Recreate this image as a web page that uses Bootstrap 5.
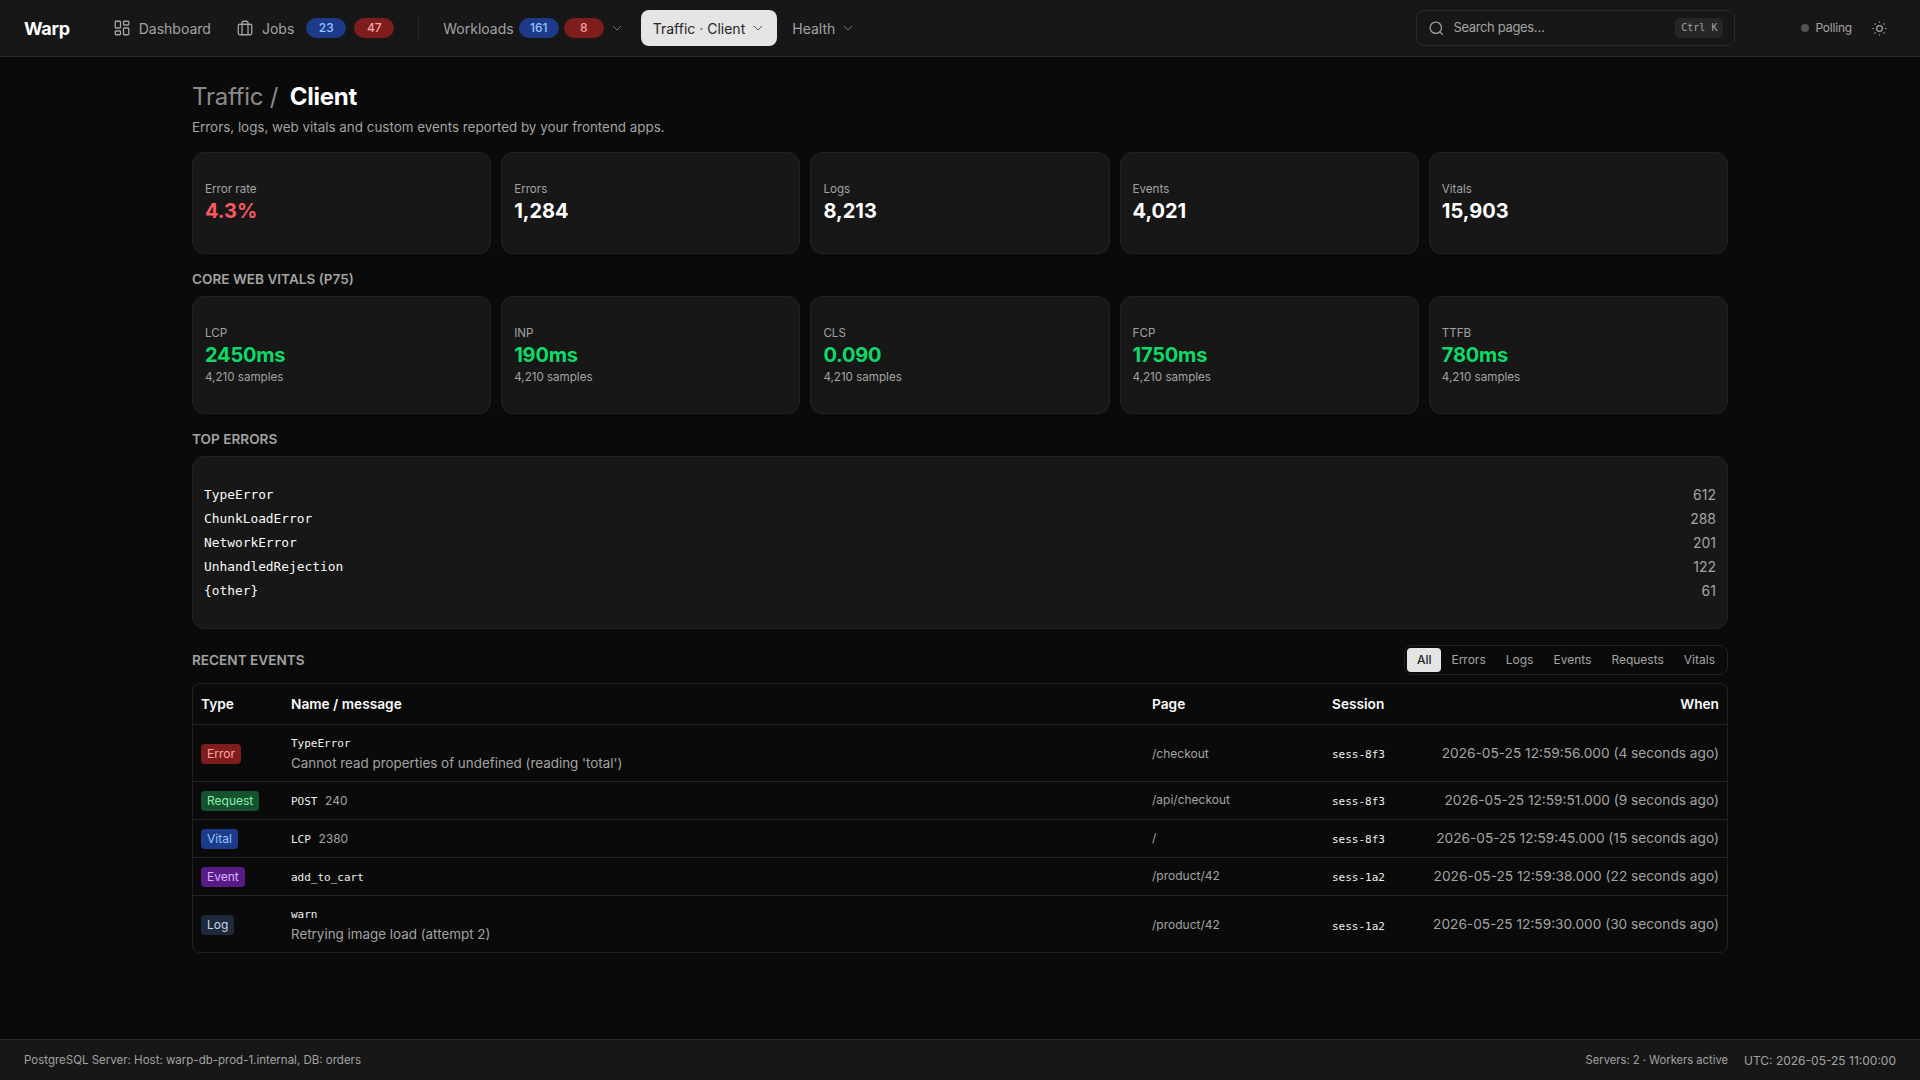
<!DOCTYPE html>
<html lang="en" data-bs-theme="dark">
<head>
    <meta charset="UTF-8">
    <meta name="viewport" content="width=device-width, initial-scale=1.0">
    <title>Warp - Traffic / Client</title>
    <link href="https://cdn.jsdelivr.net/npm/bootstrap@5.3.0/dist/css/bootstrap.min.css" rel="stylesheet">
    <style>
        body { background: #0a0a0a; color: #fafafa; font-family: Inter, "Liberation Sans", sans-serif; font-size: 14px; }
        .mono { font-family: "DejaVu Sans Mono", monospace; }

        /* top bar */
        .topbar { height: 57px; background: #171717; border-bottom: 1px solid #2a2a2a; padding: 0 24px; }
        .brand { font-size: 18px; font-weight: 700; color: #fff; letter-spacing: -.3px; text-decoration: none; margin-right: 31px; }
        .top-link { color: #a3a3a3; font-size: 14px; text-decoration: none; display: flex; align-items: center; height: 36px; padding: 0 12px; border-radius: 8px; white-space: nowrap; margin-right: 1px; }
        .top-link svg { flex: none; }
        .top-link.current { background: #e5e5e5; color: #262626; padding-right: 11px; margin-left: 3px; margin-right: 3px; gap: 5px; }
        .gap-icon { gap: 8px; }
        .gap-workloads { gap: 5px; }
        .gap-health { gap: 5px; }
        .top-link .sub-dot { color: #525252; }
        .count { display: inline-block; width: 40px; height: 20px; line-height: 20px; border-radius: 10px; text-align: center; font-size: 12px; font-weight: 500; }
        .count-blue { background: #1e3a8a; color: #93c5fd; }
        .count-red { background: #7f1d1d; color: #fca5a5; }
        .jobs-first { margin-left: 4px; }
        .top-sep { width: 1px; height: 24px; background: #2a2a2a; margin: 0 12px 0 11px; }
        .search-box { width: 319px; height: 36px; border: 1px solid #2a2a2a; border-radius: 8px; padding: 0 11px; color: #a3a3a3; font-size: 13px; letter-spacing: -.35px; }
        .search-key { background: #262626; color: #a3a3a3; border-radius: 5px; font-size: 10px; padding: 3px 6px; height: 20px; line-height: 14px; letter-spacing: 0; }
        .poll-wrap { margin-left: 66px; font-size: 12px; color: #a3a3a3; gap: 6px; letter-spacing: -.2px; }
        .poll-dot { width: 8px; height: 8px; border-radius: 50%; background: #525252; }
        .sun-icon { margin-left: 19px; margin-right: 8px; color: #a3a3a3; }

        /* page */
        .page-wrap { width: 1536px; margin: 0 auto; padding-top: 24px; }
        .page-title { font-size: 24px; line-height: 32px; font-weight: 400; color: #8a8a8a; margin: 0 0 4px; letter-spacing: -.25px; }
        .page-title b { color: #fff; font-weight: 700; }
        .title-slash { margin-right: 5px; }
        .page-sub { font-size: 13.4px; line-height: 20px; color: #a3a3a3; margin: 0 0 15px; }
        .stat-grid { display: grid; grid-template-columns: repeat(5, 1fr); gap: 10px; }
        .stat-box { background: #171717; border: 1px solid #222; border-radius: 12px; padding: 0 12px; display: flex; flex-direction: column; justify-content: center; height: 102px; }
        .stat-box.tall { height: 118px; }
        .stat-label { font-size: 11.6px; line-height: 16px; color: #a3a3a3; }
        .stat-val { font-size: 20px; line-height: 28px; font-weight: 700; color: #fff; }
        .stat-val.bad { color: #f8585f; }
        .stat-val.good { color: #0fd968; letter-spacing: -.2px; }
        .stat-note { font-size: 11.6px; line-height: 16px; color: #a3a3a3; }
        .sect-head { font-size: 13.6px; line-height: 20px; font-weight: 600; color: #a3a3a3; text-transform: uppercase; margin: 0; }
        .head-vitals { margin-top: 15px; margin-bottom: 7px; }
        .head-errors { margin-top: 15px; }
        .head-events { margin-top: 16px; }

        .errors-box { background: #171717; border: 1px solid #222; border-radius: 12px; height: 173px; padding: 26px 11px 0 11px; margin-top: 7px; }
        .err-row { height: 24px; line-height: 24px; font-size: 14px; color: #a3a3a3; }
        .err-row .mono { font-size: 12.85px; color: #fafafa; }

        .filter-group { border: 1px solid #222; border-radius: 8px; padding: 2px; height: 30px; }
        .filter-btn { font-size: 12px; color: #a3a3a3; height: 24px; line-height: 24px; padding: 0 10px; border-radius: 4px; text-decoration: none; }
        .filter-btn.current { background: #e5e5e5; color: #262626; font-weight: 500; }

        .events-wrap { border: 1px solid #222; border-radius: 8px; margin-top: 8px; overflow: hidden; }
        .events { --bs-table-bg: transparent; --bs-table-color: #a3a3a3; margin: 0; font-size: 13.4px; table-layout: fixed; }
        .col-type { width: 90px; }
        .col-page { width: 180px; }
        .col-session { width: 80px; }
        .col-when { width: 323px; }
        .events th { color: #fafafa; font-size: 13.7px; font-weight: 600; height: 40px; padding: 2px 8px 0; vertical-align: middle; border-color: #262626; }
        .events td { padding: 0 8px; vertical-align: middle; height: 38px; border-color: #262626; }
        .events tr.two-line td { height: 57px; padding-top: 2px; }
        .events tbody tr:last-child td { border-bottom: 0; }
        .events .mono { color: #f0f0f0; font-size: 11px; }
        .events .page-cell { font-size: 12px; }
        .events .when-cell { font-size: 13.7px; white-space: nowrap; }
        .ev-tag { display: inline-block; font-size: 12px; line-height: 20px; height: 20px; padding: 0 6px; border-radius: 4px; }
        .tag-error { background: #7f1d1d; color: #fca5a5; }
        .tag-request { background: #14532d; color: #86efac; }
        .tag-vital { background: #1e3a8a; color: #93c5fd; }
        .tag-event { background: #581c87; color: #d8b4fe; }
        .tag-log { background: #1e293b; color: #cbd5e1; }
        .ev-msg { line-height: 20px; display: block; }
        .ev-name { line-height: 18px; display: block; }

        .foot-bar { height: 41px; background: #171717; border-top: 1px solid #2a2a2a; padding: 1px 24px 0; font-size: 11.5px; color: #a3a3a3; }
        .foot-servers { font-size: 11.2px; }
        .foot-time { font-size: 12px; }
    </style>
</head>
<body class="d-flex flex-column min-vh-100">

    <!-- Top bar -->
    <nav class="topbar d-flex align-items-center flex-shrink-0">
        <a class="brand" href="#">Warp</a>
        <a class="top-link gap-icon" href="#">
            <svg width="18" height="18" viewBox="0 0 24 24" fill="none" stroke="currentColor" stroke-width="1.75"><rect x="3" y="3" width="7" height="9" rx="1"/><rect x="14" y="3" width="7" height="5" rx="1"/><rect x="14" y="12" width="7" height="9" rx="1"/><rect x="3" y="16" width="7" height="5" rx="1"/></svg>
            <span>Dashboard</span>
        </a>
        <a class="top-link gap-icon" href="#">
            <svg width="18" height="18" viewBox="0 0 24 24" fill="none" stroke="currentColor" stroke-width="1.75"><rect x="3" y="7" width="18" height="14" rx="2"/><path d="M16 21V5a2 2 0 0 0-2-2h-4a2 2 0 0 0-2 2v16"/></svg>
            <span>Jobs</span>
            <span class="count count-blue jobs-first">23</span>
            <span class="count count-red">47</span>
        </a>
        <span class="top-sep"></span>
        <a class="top-link gap-workloads" href="#">
            Workloads
            <span class="count count-blue">161</span>
            <span class="count count-red">8</span>
            <svg width="16" height="16" viewBox="0 0 24 24" fill="none" stroke="#737373" stroke-width="1.5"><path d="m6 9 6 6 6-6"/></svg>
        </a>
        <a class="top-link current" href="#">
            <span>Traffic <span class="sub-dot">·</span> Client</span>
            <svg width="16" height="16" viewBox="0 0 24 24" fill="none" stroke="#525252" stroke-width="1.5"><path d="m6 9 6 6 6-6"/></svg>
        </a>
        <a class="top-link gap-health" href="#">
            Health
            <svg width="16" height="16" viewBox="0 0 24 24" fill="none" stroke="#737373" stroke-width="1.5"><path d="m6 9 6 6 6-6"/></svg>
        </a>

        <div class="search-box d-flex align-items-center gap-2 ms-auto">
            <svg width="17" height="17" viewBox="0 0 24 24" fill="none" stroke="currentColor" stroke-width="1.75"><circle cx="11" cy="11" r="8"/><path d="m21 21-4.3-4.3"/></svg>
            <span>Search pages…</span>
            <span class="search-key mono ms-auto">Ctrl K</span>
        </div>
        <div class="poll-wrap d-flex align-items-center">
            <span class="poll-dot"></span>Polling
        </div>
        <svg class="sun-icon" width="17" height="17" viewBox="0 0 24 24" fill="none" stroke="currentColor" stroke-width="1.75"><circle cx="12" cy="12" r="4"/><path d="M12 2v2M12 20v2M4.93 4.93l1.41 1.41M17.66 17.66l1.41 1.41M2 12h2M20 12h2M6.34 17.66l-1.41 1.41M19.07 4.93l-1.41 1.41"/></svg>
    </nav>

    <main class="flex-grow-1">
        <div class="page-wrap">
            <h1 class="page-title">Traffic <span class="title-slash">/</span> <b>Client</b></h1>
            <p class="page-sub">Errors, logs, web vitals and custom events reported by your frontend apps.</p>

            <div class="stat-grid">
                <div class="stat-box"><div class="stat-label">Error rate</div><div class="stat-val bad">4.3%</div></div>
                <div class="stat-box"><div class="stat-label">Errors</div><div class="stat-val">1,284</div></div>
                <div class="stat-box"><div class="stat-label">Logs</div><div class="stat-val">8,213</div></div>
                <div class="stat-box"><div class="stat-label">Events</div><div class="stat-val">4,021</div></div>
                <div class="stat-box"><div class="stat-label">Vitals</div><div class="stat-val">15,903</div></div>
            </div>

            <h2 class="sect-head head-vitals">Core Web Vitals (p75)</h2>
            <div class="stat-grid">
                <div class="stat-box tall"><div class="stat-label">LCP</div><div class="stat-val good">2450ms</div><div class="stat-note">4,210 samples</div></div>
                <div class="stat-box tall"><div class="stat-label">INP</div><div class="stat-val good">190ms</div><div class="stat-note">4,210 samples</div></div>
                <div class="stat-box tall"><div class="stat-label">CLS</div><div class="stat-val good">0.090</div><div class="stat-note">4,210 samples</div></div>
                <div class="stat-box tall"><div class="stat-label">FCP</div><div class="stat-val good">1750ms</div><div class="stat-note">4,210 samples</div></div>
                <div class="stat-box tall"><div class="stat-label">TTFB</div><div class="stat-val good">780ms</div><div class="stat-note">4,210 samples</div></div>
            </div>

            <h2 class="sect-head head-errors">Top errors</h2>
            <div class="errors-box">
                <div class="err-row d-flex justify-content-between"><span class="mono">TypeError</span><span>612</span></div>
                <div class="err-row d-flex justify-content-between"><span class="mono">ChunkLoadError</span><span>288</span></div>
                <div class="err-row d-flex justify-content-between"><span class="mono">NetworkError</span><span>201</span></div>
                <div class="err-row d-flex justify-content-between"><span class="mono">UnhandledRejection</span><span>122</span></div>
                <div class="err-row d-flex justify-content-between"><span class="mono">{other}</span><span>61</span></div>
            </div>

            <div class="head-events d-flex align-items-center justify-content-between">
                <h2 class="sect-head">Recent events</h2>
                <div class="filter-group d-flex align-items-center">
                    <a class="filter-btn current" href="#">All</a>
                    <a class="filter-btn" href="#">Errors</a>
                    <a class="filter-btn" href="#">Logs</a>
                    <a class="filter-btn" href="#">Events</a>
                    <a class="filter-btn" href="#">Requests</a>
                    <a class="filter-btn" href="#">Vitals</a>
                </div>
            </div>

            <div class="events-wrap">
                <table class="table events">
                    <colgroup>
                        <col class="col-type"><col><col class="col-page"><col class="col-session"><col class="col-when">
                    </colgroup>
                    <thead>
                        <tr><th>Type</th><th>Name / message</th><th>Page</th><th>Session</th><th class="text-end">When</th></tr>
                    </thead>
                    <tbody>
                        <tr class="two-line">
                            <td><span class="ev-tag tag-error">Error</span></td>
                            <td><span class="mono ev-name">TypeError</span><span class="ev-msg">Cannot read properties of undefined (reading 'total')</span></td>
                            <td class="page-cell">/checkout</td>
                            <td><span class="mono">sess-8f3</span></td>
                            <td class="when-cell text-end">2026-05-25 12:59:56.000 (4 seconds ago)</td>
                        </tr>
                        <tr>
                            <td><span class="ev-tag tag-request">Request</span></td>
                            <td><span class="mono">POST</span>&nbsp; <span class="page-cell">240</span></td>
                            <td class="page-cell">/api/checkout</td>
                            <td><span class="mono">sess-8f3</span></td>
                            <td class="when-cell text-end">2026-05-25 12:59:51.000 (9 seconds ago)</td>
                        </tr>
                        <tr>
                            <td><span class="ev-tag tag-vital">Vital</span></td>
                            <td><span class="mono">LCP</span>&nbsp; <span class="page-cell">2380</span></td>
                            <td class="page-cell">/</td>
                            <td><span class="mono">sess-8f3</span></td>
                            <td class="when-cell text-end">2026-05-25 12:59:45.000 (15 seconds ago)</td>
                        </tr>
                        <tr>
                            <td><span class="ev-tag tag-event">Event</span></td>
                            <td><span class="mono">add_to_cart</span></td>
                            <td class="page-cell">/product/42</td>
                            <td><span class="mono">sess-1a2</span></td>
                            <td class="when-cell text-end">2026-05-25 12:59:38.000 (22 seconds ago)</td>
                        </tr>
                        <tr class="two-line">
                            <td><span class="ev-tag tag-log">Log</span></td>
                            <td><span class="mono ev-name">warn</span><span class="ev-msg">Retrying image load (attempt 2)</span></td>
                            <td class="page-cell">/product/42</td>
                            <td><span class="mono">sess-1a2</span></td>
                            <td class="when-cell text-end">2026-05-25 12:59:30.000 (30 seconds ago)</td>
                        </tr>
                    </tbody>
                </table>
            </div>
        </div>
    </main>

    <footer class="foot-bar d-flex align-items-center justify-content-between flex-shrink-0">
        <span>PostgreSQL Server: Host: warp-db-prod-1.internal, DB: orders</span>
        <span class="d-flex align-items-center gap-3"><span class="foot-servers">Servers: 2 · Workers active</span><span class="foot-time">UTC: 2026-05-25 11:00:00</span></span>
    </footer>

    <script src="https://cdn.jsdelivr.net/npm/bootstrap@5.3.0/dist/js/bootstrap.bundle.min.js"></script>
</body>
</html>
